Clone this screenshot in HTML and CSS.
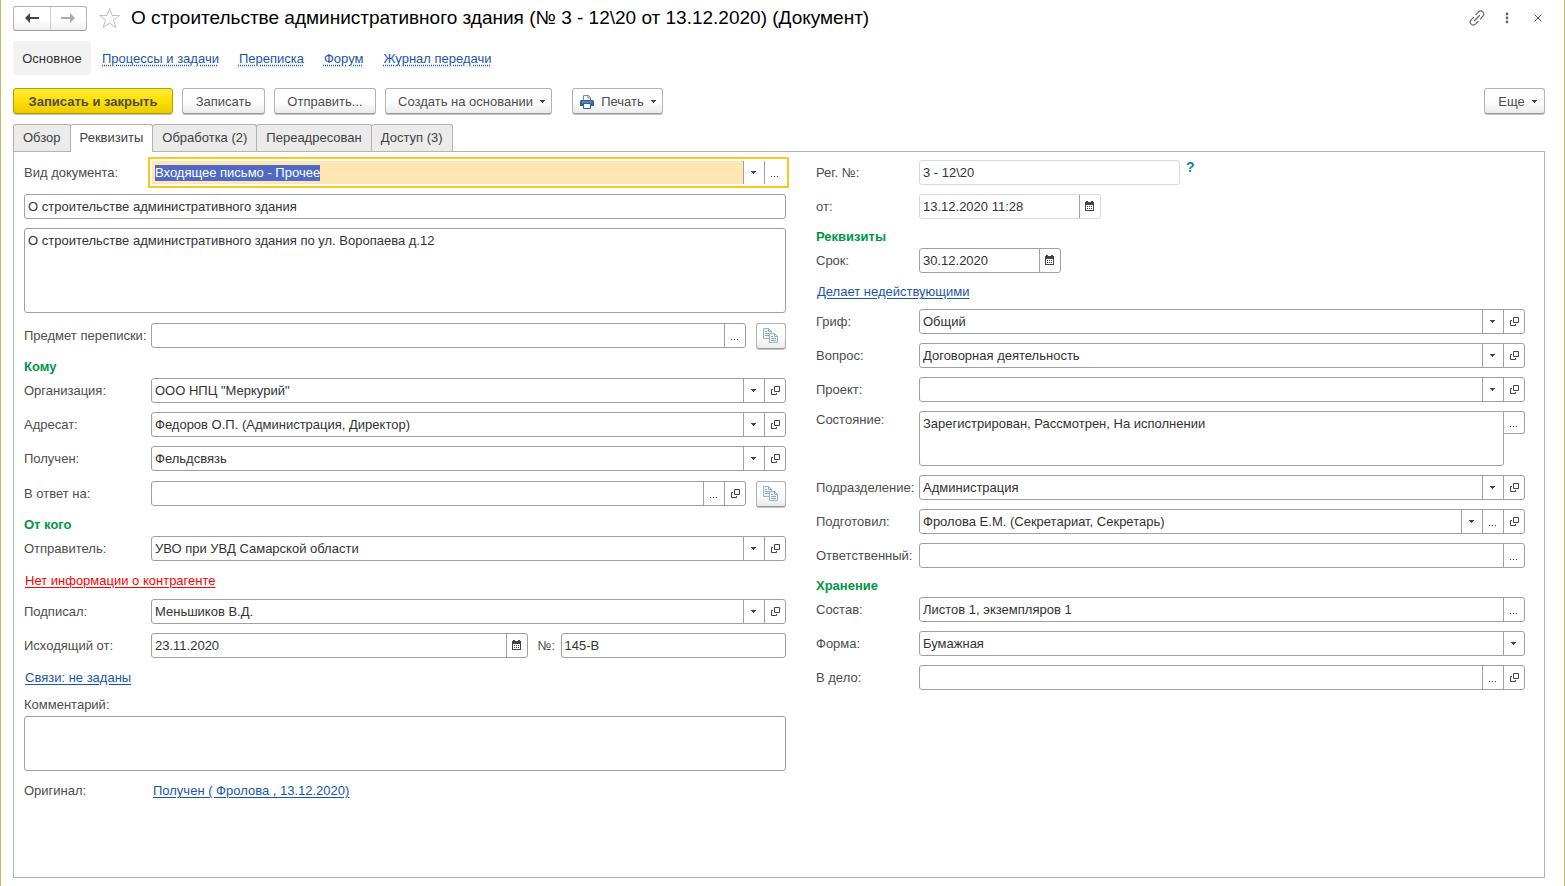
FILE: index.html
```html
<!DOCTYPE html>
<html lang="ru">
<head>
<meta charset="utf-8">
<title>О строительстве административного здания (Документ)</title>
<link rel="stylesheet" href="styles.css">
</head>
<body>
<svg class="defs" aria-hidden="true">
  <symbol id="i-down" viewBox="0 0 5 3"><path d="M0 0h5v1H4v1H3v1H2V2H1V1H0z" fill="#444"/></symbol>
  <symbol id="i-dots" viewBox="0 0 8 1"><path d="M0 0h1v1H0zM3 0h1v1H3zM6 0h1v1H6z" fill="#444"/></symbol>
  <symbol id="i-open" viewBox="0 0 9 9"><path d="M3.5.5h5v5h-5zM2 3.500H.5v5h5V7" fill="none" stroke="#444"/></symbol>
  <symbol id="i-cal" viewBox="0 0 9 11"><path d="M0 1h1V0h2v1h3V0h2v1h1v9H0zM1 4v5h7V4z" fill="#444" fill-rule="evenodd"/><path d="M2 5h1v1H2zM4 5h1v1H4zM6 5h1v1H6zM2 7h1v1H2zM4 7h1v1H4zM6 7h1v1H6z" fill="#444"/></symbol>
  <symbol id="i-copy" viewBox="0 0 16 16"><path d="M.5.5h5l3 3v7h-8z" fill="#eef3f8" stroke="#9db3c6"/><path d="M5.500.5v3h3M2 3.500h2M2 5.500h4M2 7.500h4" fill="none" stroke="#8da6bc"/><path d="M6.500 5.500h5l3 3v6h-8z" fill="#eef3f8" stroke="#9db3c6"/><path d="M11.500 5.500v3h3M8 8.500h2M8 10.500h5M8 12.500h5" fill="none" stroke="#8da6bc"/></symbol>
</svg>
<div class="page">
  <header class="titlebar">
    <div class="history">
      <button type="button" aria-label="Назад"><svg width="14" height="10" viewBox="0 0 14 10"><path d="M5 0v4h9v2H5v4L0 5z" fill="#444"/></svg></button>
      <button type="button" aria-label="Вперед"><svg width="14" height="10" viewBox="0 0 14 10"><path d="M9 0v4H0v2h9v4l5-5z" fill="#aaa"/></svg></button>
    </div>
    <button type="button" class="plain star" aria-label="В избранное"><svg width="23" height="22" viewBox="0 0 23 22"><path d="M11.500 1.500l2.600 7h7.400l-6 4.500 2.300 7.500-6.300-4.600-6.300 4.600L7.500 13l-6-4.500h7.400z" fill="#fff" stroke="#b9bfc7"/></svg></button>
    <h1>О строительстве административного здания (№ 3 - 12\20 от 13.12.2020) (Документ)</h1>
    <div class="window-tools">
      <button type="button" class="plain" aria-label="Ссылка"><svg width="16" height="16" viewBox="0 0 16 16" fill="none" stroke="#666" stroke-width="1.200" stroke-linecap="round"><path d="M7 4.500l2.500-2.600a3 3 0 0 1 4.400 4.300L11.500 8.800M9 11.500l-2.500 2.600a3 3 0 0 1-4.400-4.300L4.500 7.300M5.500 10.500l5-5"/></svg></button>
      <button type="button" class="plain" aria-label="Меню"><svg width="4" height="12" viewBox="0 0 4 12" fill="#666"><circle cx="2" cy="2" r="1.400"/><circle cx="2" cy="6" r="1.400"/><circle cx="2" cy="10" r="1.400"/></svg></button>
      <button type="button" class="plain close" aria-label="Закрыть"><svg width="8" height="8" viewBox="0 0 8 8"><path d="M.5.5l7 7M7.500.5l-7 7" stroke="#555"/></svg></button>
    </div>
  </header>

  <nav class="sections">
    <span class="current">Основное</span>
    <a href="#">Процессы и задачи</a>
    <a href="#">Переписка</a>
    <a href="#">Форум</a>
    <a href="#">Журнал передачи</a>
  </nav>

  <div class="toolbar">
    <button type="button" class="btn primary w-xl">Записать и закрыть</button>
    <button type="button" class="btn w-s">Записать</button>
    <button type="button" class="btn w-m">Отправить...</button>
    <button type="button" class="btn w-xl menu">Создать на основании<svg width="5" height="3"><use href="#i-down"/></svg></button>
    <button type="button" class="btn print menu"><svg class="printer" width="14" height="14" viewBox="0 0 14 14"><path d="M3.500 6V.5h5l2 2V6" fill="#fff" stroke="#6b8fb0"/><path d="M8 .5V3h2.500" fill="none" stroke="#6b8fb0"/><path d="M1 5h12l1 1v5H0V6z" fill="#346591"/><path d="M1.500 7h11" stroke="#7fa3c2"/><path d="M3.500 8.500h7v5h-7z" fill="#fff" stroke="#346591"/></svg>Печать<svg width="5" height="3"><use href="#i-down"/></svg></button>
    <button type="button" class="btn more menu">Еще<svg width="5" height="3"><use href="#i-down"/></svg></button>
  </div>

  <div class="tabs" role="tablist">
    <button type="button" role="tab">Обзор</button>
    <button type="button" role="tab" aria-selected="true">Реквизиты</button>
    <button type="button" role="tab">Обработка (2)</button>
    <button type="button" role="tab">Переадресован</button>
    <button type="button" role="tab">Доступ (3)</button>
  </div>

  <form class="panel">
    <div class="col left">
      <div class="row">
        <label for="kind">Вид документа:</label>
        <div class="field active"><input id="kind" value="Входящее письмо - Прочее"><button type="button" aria-label="Список"><svg width="5" height="3"><use href="#i-down"/></svg></button><button type="button" aria-label="Выбрать"><svg class="dots" width="8" height="1"><use href="#i-dots"/></svg></button></div>
      </div>
      <div class="row"><div class="field"><input aria-label="Заголовок" value="О строительстве административного здания"></div></div>
      <div class="row"><textarea class="tall" aria-label="Содержание">О строительстве административного здания по ул. Воропаева д.12</textarea></div>
      <div class="row with-copy">
        <label for="subject">Предмет переписки:</label>
        <div class="field"><input id="subject"><button type="button" aria-label="Выбрать"><svg class="dots" width="8" height="1"><use href="#i-dots"/></svg></button></div>
        <button type="button" class="btn copy" aria-label="Скопировать"><svg width="16" height="16"><use href="#i-copy"/></svg></button>
      </div>
      <h2>Кому</h2>
      <div class="row">
        <label for="org">Организация:</label>
        <div class="field"><input id="org" value="ООО НПЦ &quot;Меркурий&quot;"><button type="button" aria-label="Список"><svg width="5" height="3"><use href="#i-down"/></svg></button><button type="button" aria-label="Открыть"><svg class="open" width="9" height="9"><use href="#i-open"/></svg></button></div>
      </div>
      <div class="row">
        <label for="addressee">Адресат:</label>
        <div class="field"><input id="addressee" value="Федоров О.П. (Администрация, Директор)"><button type="button" aria-label="Список"><svg width="5" height="3"><use href="#i-down"/></svg></button><button type="button" aria-label="Открыть"><svg class="open" width="9" height="9"><use href="#i-open"/></svg></button></div>
      </div>
      <div class="row">
        <label for="received">Получен:</label>
        <div class="field"><input id="received" value="Фельдсвязь"><button type="button" aria-label="Список"><svg width="5" height="3"><use href="#i-down"/></svg></button><button type="button" aria-label="Открыть"><svg class="open" width="9" height="9"><use href="#i-open"/></svg></button></div>
      </div>
      <div class="row with-copy">
        <label for="reply">В ответ на:</label>
        <div class="field"><input id="reply"><button type="button" aria-label="Выбрать"><svg class="dots" width="8" height="1"><use href="#i-dots"/></svg></button><button type="button" aria-label="Открыть"><svg class="open" width="9" height="9"><use href="#i-open"/></svg></button></div>
        <button type="button" class="btn copy" aria-label="Скопировать"><svg width="16" height="16"><use href="#i-copy"/></svg></button>
      </div>
      <h2>От кого</h2>
      <div class="row">
        <label for="sender">Отправитель:</label>
        <div class="field"><input id="sender" value="УВО при УВД Самарской области"><button type="button" aria-label="Список"><svg width="5" height="3"><use href="#i-down"/></svg></button><button type="button" aria-label="Открыть"><svg class="open" width="9" height="9"><use href="#i-open"/></svg></button></div>
      </div>
      <div class="line"><a class="warn" href="#">Нет информации о контрагенте</a></div>
      <div class="row">
        <label for="signed">Подписал:</label>
        <div class="field"><input id="signed" value="Меньшиков В.Д."><button type="button" aria-label="Список"><svg width="5" height="3"><use href="#i-down"/></svg></button><button type="button" aria-label="Открыть"><svg class="open" width="9" height="9"><use href="#i-open"/></svg></button></div>
      </div>
      <div class="row">
        <label for="outdate">Исходящий от:</label>
        <div class="field out-date"><input id="outdate" value="23.11.2020"><button type="button" aria-label="Календарь"><svg width="9" height="11"><use href="#i-cal"/></svg></button></div>
        <label class="num" for="outnum">№:</label>
        <div class="field out-num"><input id="outnum" value="145-В"></div>
      </div>
      <div class="line"><a href="#">Связи: не заданы</a></div>
      <label class="above" for="comment">Комментарий:</label>
      <div class="row"><textarea id="comment"></textarea></div>
      <div class="line original"><span>Оригинал:</span><a href="#">Получен ( Фролова , 13.12.2020)</a></div>
    </div>

    <div class="col right">
      <div class="row">
        <label for="regnum">Рег. №:</label>
        <div class="field readonly reg"><input id="regnum" value="3 - 12\20" readonly></div>
        <button type="button" class="plain help" aria-label="Справка">?</button>
      </div>
      <div class="row">
        <label for="regdate">от:</label>
        <div class="field readonly date-time"><input id="regdate" value="13.12.2020 11:28" readonly><button type="button" aria-label="Календарь"><svg width="9" height="11"><use href="#i-cal"/></svg></button></div>
      </div>
      <h2>Реквизиты</h2>
      <div class="row">
        <label for="due">Срок:</label>
        <div class="field date"><input id="due" value="30.12.2020"><button type="button" aria-label="Календарь"><svg width="9" height="11"><use href="#i-cal"/></svg></button></div>
      </div>
      <div class="line"><a href="#">Делает недействующими</a></div>
      <div class="row">
        <label for="access">Гриф:</label>
        <div class="field"><input id="access" value="Общий"><button type="button" aria-label="Список"><svg width="5" height="3"><use href="#i-down"/></svg></button><button type="button" aria-label="Открыть"><svg class="open" width="9" height="9"><use href="#i-open"/></svg></button></div>
      </div>
      <div class="row">
        <label for="topic">Вопрос:</label>
        <div class="field"><input id="topic" value="Договорная деятельность"><button type="button" aria-label="Список"><svg width="5" height="3"><use href="#i-down"/></svg></button><button type="button" aria-label="Открыть"><svg class="open" width="9" height="9"><use href="#i-open"/></svg></button></div>
      </div>
      <div class="row">
        <label for="project">Проект:</label>
        <div class="field"><input id="project"><button type="button" aria-label="Список"><svg width="5" height="3"><use href="#i-down"/></svg></button><button type="button" aria-label="Открыть"><svg class="open" width="9" height="9"><use href="#i-open"/></svg></button></div>
      </div>
      <div class="row state">
        <label for="state">Состояние:</label>
        <textarea id="state">Зарегистрирован, Рассмотрен, На исполнении</textarea>
        <button type="button" class="side" aria-label="Выбрать"><svg class="dots" width="8" height="1"><use href="#i-dots"/></svg></button>
      </div>
      <div class="row">
        <label for="dept">Подразделение:</label>
        <div class="field"><input id="dept" value="Администрация"><button type="button" aria-label="Список"><svg width="5" height="3"><use href="#i-down"/></svg></button><button type="button" aria-label="Открыть"><svg class="open" width="9" height="9"><use href="#i-open"/></svg></button></div>
      </div>
      <div class="row">
        <label for="author">Подготовил:</label>
        <div class="field"><input id="author" value="Фролова Е.М. (Секретариат, Секретарь)"><button type="button" aria-label="Список"><svg width="5" height="3"><use href="#i-down"/></svg></button><button type="button" aria-label="Выбрать"><svg class="dots" width="8" height="1"><use href="#i-dots"/></svg></button><button type="button" aria-label="Открыть"><svg class="open" width="9" height="9"><use href="#i-open"/></svg></button></div>
      </div>
      <div class="row">
        <label for="resp">Ответственный:</label>
        <div class="field"><input id="resp"><button type="button" aria-label="Выбрать"><svg class="dots" width="8" height="1"><use href="#i-dots"/></svg></button></div>
      </div>
      <h2>Хранение</h2>
      <div class="row">
        <label for="content">Состав:</label>
        <div class="field"><input id="content" value="Листов 1, экземпляров 1"><button type="button" aria-label="Выбрать"><svg class="dots" width="8" height="1"><use href="#i-dots"/></svg></button></div>
      </div>
      <div class="row">
        <label for="form">Форма:</label>
        <div class="field"><input id="form" value="Бумажная"><button type="button" aria-label="Список"><svg width="5" height="3"><use href="#i-down"/></svg></button></div>
      </div>
      <div class="row">
        <label for="file">В дело:</label>
        <div class="field"><input id="file"><button type="button" aria-label="Выбрать"><svg class="dots" width="8" height="1"><use href="#i-dots"/></svg></button><button type="button" aria-label="Открыть"><svg class="open" width="9" height="9"><use href="#i-open"/></svg></button></div>
      </div>
    </div>
  </form>
</div>
<script src="form.js"></script>
</body>
</html>
```
FILE: styles.css
```css
* { box-sizing: border-box; }

body {
  margin: 0;
  background: #fff;
  color: #4d4d4d;
  font: 13px/16px "Liberation Sans", Arial, sans-serif;
}

button, input, textarea { font: inherit; color: inherit; }
button { padding: 0; background: none; border: 0; }
svg { display: block; flex: none; }
.defs { position: absolute; width: 0; height: 0; }
a { color: #1a55ad; text-underline-offset: 2px; }

.page {
  display: flex;
  flex-direction: column;
  min-height: 100vh;
  padding: 5px 19px 8px 12px;
  border: solid #c9b867;
  border-width: 0 1px;
}

/* Title bar */
.titlebar { display: flex; align-items: center; height: 26px; }
.history {
  display: flex;
  width: 74px;
  height: 25px;
  border: 1px solid #b3b3b3;
  border-bottom-color: #999;
  border-radius: 3px;
  background: linear-gradient(#fff 50%, #f0f0f0);
}
.history button { display: flex; flex: 1; align-items: center; justify-content: center; }
.history button + button { border-left: 1px solid #d0d0d0; }
.star { margin: 0 10px 0 11px; }
h1 { margin: 0; color: #000; font-size: 19px; font-weight: 400; line-height: 24px; white-space: nowrap; }
.window-tools { display: flex; align-items: center; gap: 20px; margin-left: auto; padding-right: 3px; }
.close { margin-left: 5px; }

/* Section links */
.sections { display: flex; align-items: center; gap: 20px; margin-top: 10px; }
.sections .current {
  width: 78px;
  margin-right: -9px;
  padding-top: 2px;
  border-radius: 4px;
  background: #f2f2f2;
  color: #333;
  line-height: 32px;
  text-align: center;
}
.sections a { padding-top: 2px; text-decoration-style: dotted; }

/* Command bar */
.toolbar { display: flex; gap: 9px; margin-top: 13px; }
.btn {
  display: flex;
  align-items: center;
  justify-content: center;
  height: 26px;
  padding-top: 1px;
  border: 1px solid #b3b3b3;
  border-bottom-color: #999;
  border-radius: 3px;
  background: linear-gradient(#fff 50%, #ebebeb);
  box-shadow: 0 1px 0 #c4c4c4;
  white-space: nowrap;
}
.primary {
  border-color: #b39b00;
  background: linear-gradient(#ffea3d, #ffe000 50%, #ebcc00);
  font-weight: 700;
}
.w-s { width: 83px; }
.w-m { width: 102px; }
.w-xl { min-width: 160px; }
.menu { gap: 7px; padding-left: 6px; }
.w-xl.menu { width: 167px; }
.print { width: 91px; margin-left: 11px; padding-left: 1px; }
.more { width: 61px; margin-left: auto; }

/* Tabs */
.tabs { display: flex; margin-top: 10px; }
.tabs button {
  height: 27px;
  padding: 0 9px;
  border: 1px solid #b3b3b3;
  border-bottom: 0;
  border-radius: 3px 3px 0 0;
  background: #ebebeb;
  color: #404040;
}
.tabs button + button { margin-left: -1px; }
.tabs [aria-selected] { z-index: 1; height: 28px; margin-bottom: -1px; padding-bottom: 1px; background: #fff; }

/* Form */
.panel {
  display: grid;
  flex: 1;
  grid-template-columns: 762fr 709fr;
  gap: 30px;
  padding: 8px 19px 8px 10px;
  border: 1px solid #b3b3b3;
}
.col { display: flex; flex-direction: column; min-width: 0; }
.row { display: flex; align-items: center; margin-bottom: 9px; }
.row label { flex: none; white-space: nowrap; }
.left .row label { width: 127px; }
.right .row label { width: 103px; }
h2 { margin: 1px 0 3px; color: #009646; font-size: 13px; font-weight: 700; line-height: 16px; }

.field {
  display: flex;
  flex: 1;
  min-width: 0;
  height: 25px;
  border: 1px solid #a0a0a0;
  border-radius: 3px;
  background: #fff;
}
.field input { flex: 1; min-width: 0; padding: 0 3px; border: 0; outline: 0; background: none; color: #333; }
.field button {
  display: flex;
  flex: none;
  align-items: center;
  justify-content: center;
  width: 21px;
  padding-right: 1px;
  border-left: 1px solid #a0a0a0;
}
.dots { margin: 8px 0 0 1px; }
.open { margin-left: 2px; }
.field.active { border-color: #fff; outline: 2px solid #fbc91d; outline-offset: 1px; border-radius: 0; }
.field.active input { background: #ffe6b3; }
.field.active input::selection { background: #5069c4; color: #fff; }
.field.readonly { border-color: #d9d9d9; }

textarea {
  display: block;
  flex: 1;
  min-width: 0;
  height: 55px;
  padding: 4px 3px;
  border: 1px solid #a0a0a0;
  border-radius: 3px;
  outline: 0;
  background: #fff;
  color: #333;
  resize: none;
}
textarea.tall { height: 85px; }

.with-copy { height: 27px; }
.copy { width: 30px; margin-left: 10px; }
.line { margin: 1px 0 8px; padding-left: 1px; line-height: 20px; }
.right .line { line-height: 18px; }
.warn { color: #f00; }
.above { margin: 1px 0 3px; }
.left .row .num { width: 33px; padding-left: 10px; }
.out-date { flex: 377; }
.out-num { flex: 225; }
.original { display: flex; padding-left: 0; }
.original span { width: 129px; }

.reg { flex: 0 1 261px; }
.date-time { flex: 0 1 182px; }
.date { flex: 0 1 142px; }
.help { align-self: flex-start; margin-left: 6px; color: #1a7ab5; font-size: 14px; font-weight: 700; line-height: 14px; }
.state { align-items: flex-start; }
.state label { padding-top: 1px; }
.state textarea { border-top-right-radius: 0; }
.side {
  display: flex;
  align-items: center;
  justify-content: center;
  width: 21px;
  height: 23px;
  padding-right: 1px;
  border: 1px solid #a0a0a0;
  border-left: 0;
  border-radius: 0 3px 3px 0;
}
```
FILE: form.js
```js
const kind = document.getElementById('kind');
kind.focus();
kind.select();
```
